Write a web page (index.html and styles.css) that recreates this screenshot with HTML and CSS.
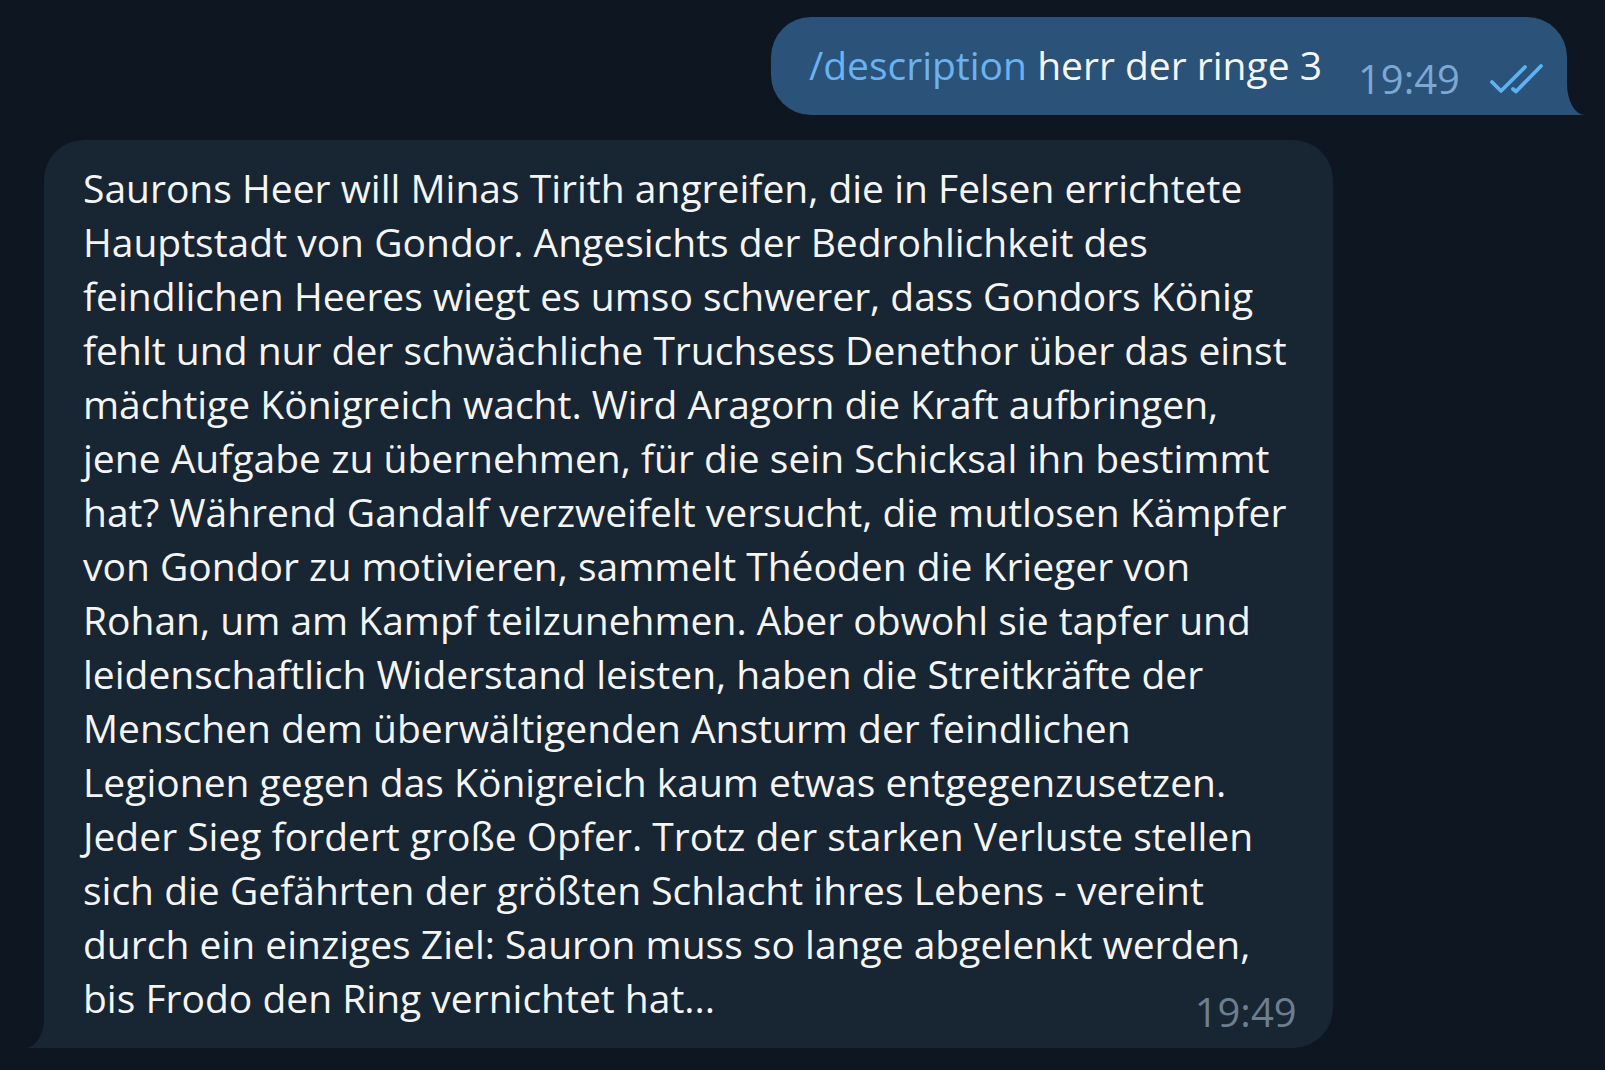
FILE: index.html
```html
<!DOCTYPE html>
<html lang="de">
<head>
<meta charset="utf-8">
<title>Chat</title>
<link rel="stylesheet" href="styles.css">
</head>
<body>
<div class="chat">
  <div class="row row-out">
    <div class="bubble bubble-out">
      <div class="out-text"><span class="cmd">/description</span> herr der ringe 3</div>
      <div class="meta">
        <span class="time time-out">19:49</span>
        <svg class="checks" width="56" height="32" viewBox="0 0 56 32" aria-hidden="true">
          <path d="M4 19 L13 28 L37 4" fill="none" stroke="#5cb2f2" stroke-width="3.8" stroke-linecap="round" stroke-linejoin="round"/>
          <path d="M25 26 L28 28.5 L53 3" fill="none" stroke="#5cb2f2" stroke-width="3.8" stroke-linecap="round" stroke-linejoin="round"/>
        </svg>
      </div>
      <svg class="tail tail-out" width="18" height="31" viewBox="0 0 18 31" aria-hidden="true"><path d="M0 0 A18 31 0 0 0 18 31 L0 31 Z" fill="#2b5278"/></svg>
    </div>
  </div>
  <div class="row row-in">
    <div class="bubble bubble-in">
      <div class="in-text">Saurons Heer will Minas Tirith angreifen, die in Felsen errichtete<br>Hauptstadt von Gondor. Angesichts der Bedrohlichkeit des<br>feindlichen Heeres wiegt es umso schwerer, dass Gondors König<br>fehlt und nur der schwächliche Truchsess Denethor über das einst<br>mächtige Königreich wacht. Wird Aragorn die Kraft aufbringen,<br>jene Aufgabe zu übernehmen, für die sein Schicksal ihn bestimmt<br>hat? Während Gandalf verzweifelt versucht, die mutlosen Kämpfer<br>von Gondor zu motivieren, sammelt Théoden die Krieger von<br>Rohan, um am Kampf teilzunehmen. Aber obwohl sie tapfer und<br>leidenschaftlich Widerstand leisten, haben die Streitkräfte der<br>Menschen dem überwältigenden Ansturm der feindlichen<br>Legionen gegen das Königreich kaum etwas entgegenzusetzen.<br>Jeder Sieg fordert große Opfer. Trotz der starken Verluste stellen<br>sich die Gefährten der größten Schlacht ihres Lebens - vereint<br>durch ein einziges Ziel: Sauron muss so lange abgelenkt werden,<br>bis Frodo den Ring vernichtet hat...</div>
      <span class="time time-in">19:49</span>
      <svg class="tail tail-in" width="19" height="30" viewBox="0 0 19 30" aria-hidden="true"><path d="M19 0 A19 30 0 0 1 0 30 L19 30 Z" fill="#182533"/></svg>
    </div>
  </div>
</div>
</body>
</html>
```
FILE: styles.css
```css
html, body {
  margin: 0;
  padding: 0;
  background: #0e1621;
}
body {
  width: 1605px;
  height: 1070px;
  overflow: hidden;
  font-family: "Open Sans", "Noto Sans", sans-serif;
  color: #f5f5f5;
}
.chat {
  display: flex;
  flex-direction: column;
  padding-top: 17px;
}
.row {
  display: flex;
}
.row-out {
  justify-content: flex-end;
  padding-right: 38px;
}
.row-in {
  justify-content: flex-start;
  padding-left: 44px;
  margin-top: 25px;
}
.bubble {
  position: relative;
}
.bubble-out {
  display: flex;
  align-items: flex-end;
  background: #2b5278;
  border-radius: 40px 40px 0 40px;
  padding: 21px 23px 0 38px;
}
.out-text {
  font-size: 39px;
  line-height: 54px;
  white-space: nowrap;
  margin-bottom: 23px;
}
.cmd {
  color: #6ab3f3;
}
.meta {
  display: flex;
  align-items: center;
  gap: 28px;
  margin-left: 36px;
  padding-bottom: 16px;
}
.time {
  font-size: 40px;
  line-height: 40px;
  white-space: nowrap;
}
.time-out {
  color: #7da8d3;
}
.checks {
  display: block;
}
.tail {
  position: absolute;
  bottom: 0;
  display: block;
}
.tail-out {
  left: 100%;
}
.tail-in {
  right: 100%;
}
.bubble-in {
  background: #182533;
  border-radius: 40px 40px 40px 0;
  padding: 21px 46px 23px 39px;
}
.in-text {
  font-size: 39px;
  line-height: 54px;
  white-space: nowrap;
}
.time-in {
  position: absolute;
  right: 36px;
  bottom: 16px;
  color: #6d7f8f;
}
```
